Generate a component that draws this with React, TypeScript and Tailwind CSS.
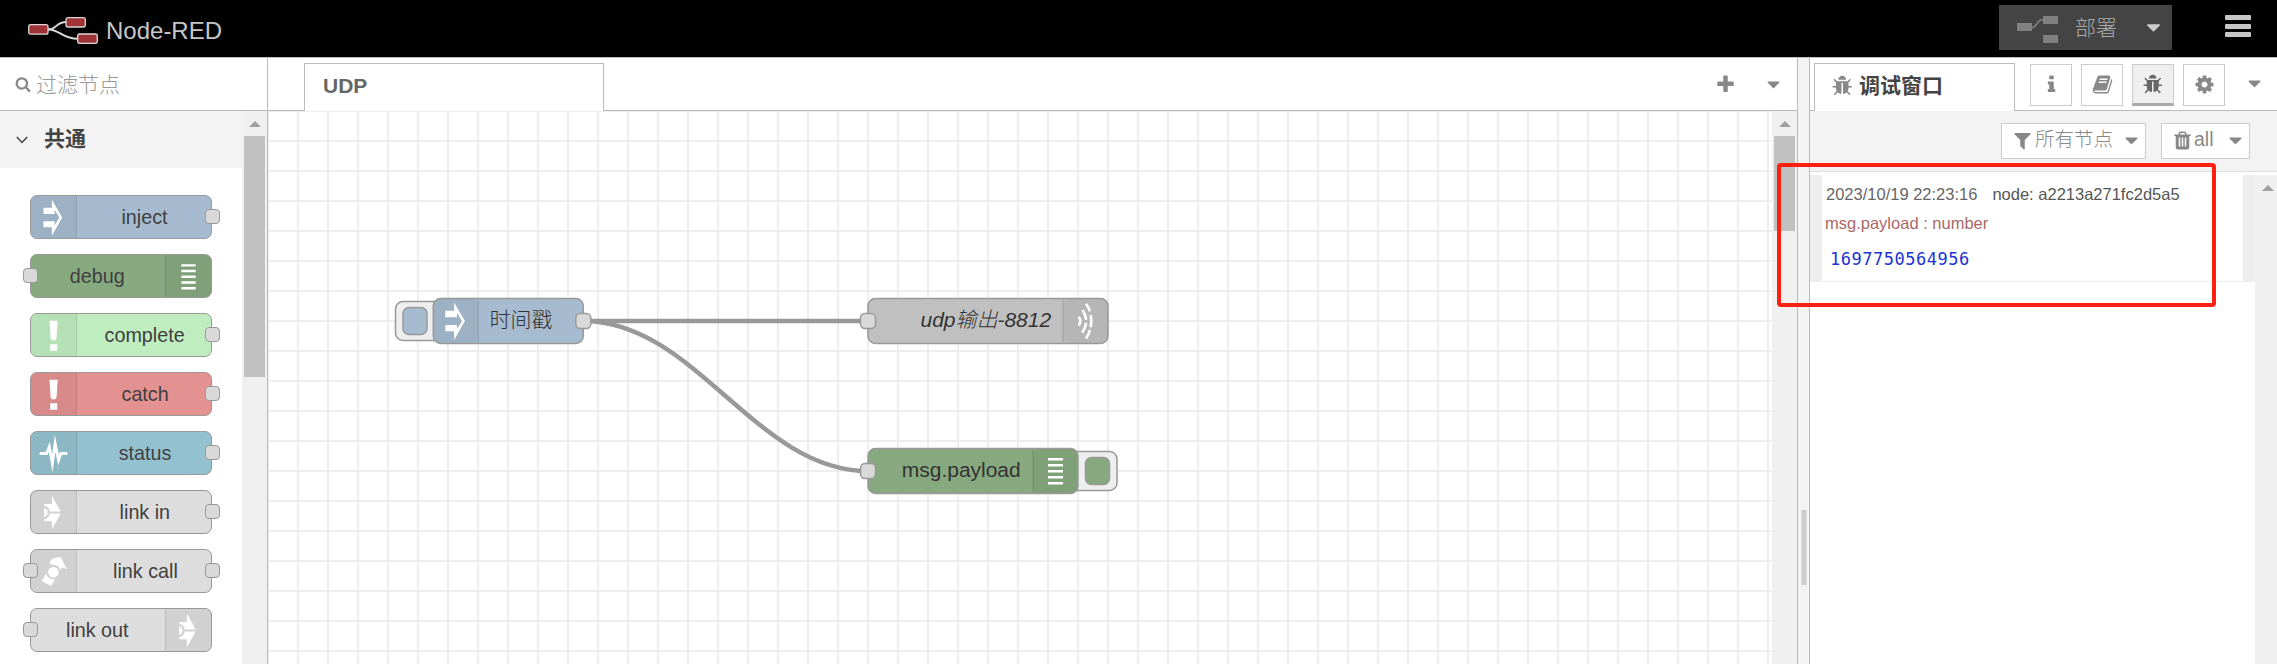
import React from "react";

const PATHS = {
  search:
    "M1216 832q0-185-131.5-316.5t-316.5-131.5-316.5 131.5-131.5 316.5 131.5 316.5 316.5 131.5 316.5-131.5 131.5-316.5zm512 832q0 52-38 90t-90 38q-54 0-90-38l-343-342q-179 124-399 124-143 0-273.5-55.5t-225-150-150-225-55.5-273.5 55.5-273.5 150-225 225-150 273.5-55.5 273.5 55.5 225 150 150 225 55.5 273.5q0 220-124 399l343 343q37 37 37 90z",
  plus: "M1600 736v192q0 40-28 68t-68 28h-416v416q0 40-28 68t-68 28h-192q-40 0-68-28t-28-68v-416h-416q-40 0-68-28t-28-68v-192q0-40 28-68t68-28h416v-416q0-40 28-68t68-28h192q40 0 68 28t28 68v416h416q40 0 68 28t28 68z",
  caret:
    "M1408 704q0 26-19 45l-448 448q-19 19-45 19t-45-19l-448-448q-19-19-19-45t19-45 45-19h896q26 0 45 19t19 45z",
  info: "M1216 1344v128q0 26-19 45t-45 19h-512q-26 0-45-19t-19-45v-128q0-26 19-45t45-19h64v-384h-64q-26 0-45-19t-19-45v-128q0-26 19-45t45-19h384q26 0 45 19t19 45v576h64q26 0 45 19t19 45zm-128-1152v192q0 26-19 45t-45 19h-256q-26 0-45-19t-19-45v-192q0-26 19-45t45-19h256q26 0 45 19t19 45z",
  book: "M1703 478q40 57 18 129l-275 906q-19 64-76.5 107.5t-122.5 43.5h-923q-77 0-148.5-53.5t-99.5-131.5q-24-67-2-127 0-4 3-27t4-37q1-8-3-21.5t-3-19.5q2-11 8-21t16.5-23.5 16.5-23.5q23-38 45-91.5t30-91.5q3-10 .5-30t-.5-28q3-11 17-28t17-23q21-36 42-92t25-90q1-9-2.5-32t.5-28q4-13 22-30.5t22-22.5q19-26 42.5-84.5t27.5-96.5q1-8-3-25.5t-2-26.5q2-8 9-18t18-23 17-21q8-12 16.5-30.5t15-35 16-36 19.5-32 26.5-23.5 36-11.5 47.5 5.5l-1 3q38-9 51-9h761q74 0 114 56t18 130l-274 906q-36 119-71.5 153.5t-128.5 34.5h-869q-27 0-38 15-11 16-1 43 24 70 144 70h923q29 0 56-15.5t35-41.5l300-987q7-22 5-57 38 15 59 43zm-1064 2q-4 13 2 22.5t20 9.5h608q13 0 25.5-9.5t16.5-22.5l21-64q4-13-2-22.5t-20-9.5h-608q-13 0-25.5 9.5t-16.5 22.5zm-83 256q-4 13 2 22.5t20 9.5h608q13 0 25.5-9.5t16.5-22.5l21-64q4-13-2-22.5t-20-9.5h-608q-13 0-25.5 9.5t-16.5 22.5z",
  bug: "M1632 960q0 26-19 45t-45 19h-224q0 171-67 290l208 209q19 19 19 45t-19 45q-18 19-45 19t-45-19l-198-197q-5 5-15 13t-42 28.5-65 36.5-82 29-97 13v-896h-128v896q-51 0-101.5-13.5t-87-33-66-39-43.5-32.5l-15-14-183 207q-20 21-48 21-24 0-43-16-19-18-20.5-44.5t15.5-46.5l202-227q-58-114-58-274h-224q-26 0-45-19t-19-45 19-45 45-19h224v-294l-173-173q-19-19-19-45t19-45 45-19 45 19l173 173h844l173-173q19-19 45-19t45 19 19 45-19 45l-173 173v294h224q26 0 45 19t19 45zm-480-576h-640q0-133 93.5-226.5t226.5-93.5 226.5 93.5 93.5 226.5z",
  cog: "M1152 896q0-106-75-181t-181-75-181 75-75 181 75 181 181 75 181-75 75-181zm512-109v222q0 12-8 23t-20 13l-185 28q-19 54-39 91 35 50 107 138 10 12 10 25t-9 23q-27 37-99 108t-94 71q-12 0-26-9l-138-108q-44 23-91 38-16 136-29 186-7 28-36 28h-222q-14 0-24.5-8.5t-11.5-21.5l-28-184q-49-16-90-37l-141 107q-10 9-25 9-14 0-25-11-126-114-165-168-7-10-7-23 0-12 8-23 15-21 51-66.5t54-70.5q-27-50-41-99l-183-27q-13-2-21-12.5t-8-23.5v-222q0-12 8-23t19-13l186-28q14-46 39-92-40-57-107-138-10-12-10-24 0-10 9-23 26-36 98.5-107.5t94.5-71.5q13 0 26 10l138 107q44-23 91-38 16-136 29-186 7-28 36-28h222q14 0 24.5 8.5t11.5 21.5l28 184q49 16 90 37l142-107q9-9 24-9 13 0 25 10 129 119 165 170 7 8 7 22 0 12-8 23-15 21-51 66.5t-54 70.5q26 50 41 98l183 28q13 2 21 12.5t8 23.5z",
  filter:
    "M1595 295q17 41-14 70l-493 493v742q0 42-39 59-13 5-25 5-27 0-45-19l-256-256q-19-19-19-45v-486l-493-493q-31-29-14-70 17-39 59-39h1280q42 0 59 39z",
  trash:
    "M704 1376v-704q0-14-9-23t-23-9h-64q-14 0-23 9t-9 23v704q0 14 9 23t23 9h64q14 0 23-9t9-23zm256 0v-704q0-14-9-23t-23-9h-64q-14 0-23 9t-9 23v704q0 14 9 23t23 9h64q14 0 23-9t9-23zm256 0v-704q0-14-9-23t-23-9h-64q-14 0-23 9t-9 23v704q0 14 9 23t23 9h64q14 0 23-9t9-23zm-544-992h448l-48-117q-7-9-17-11h-317q-10 2-17 11zm928 32v64q0 14-9 23t-23 9h-96v948q0 83-47 143.5t-113 60.5h-832q-66 0-113-58.5t-47-141.5v-952h-96q-14 0-23-9t-9-23v-64q0-14 9-23t23-9h309l70-167q15-37 54-63t79-26h320q40 0 79 26t54 63l70 167h309q14 0 23 9t9 23z",
};

function Icon({ name, className = "size-[21px]" }: { name: keyof typeof PATHS; className?: string }) {
  return (
    <svg viewBox="0 0 1792 1792" className={`shrink-0 fill-current ${className}`}>
      <path d={PATHS[name]} />
    </svg>
  );
}

type NodeIconName = "inject" | "debug" | "alert" | "status" | "link" | "call" | "udp";

/* Node icons are drawn on a 45 x 45 grid. */
function Glyph({ name, cut = "#d2d2d2" }: { name: NodeIconName; cut?: string }) {
  switch (name) {
    case "inject":
      return (
        <path
          fill="#fff"
          fillRule="evenodd"
          d="M12 12.3h8.800V4L31.600 22.500 20.800 41.500v-8.800H12v-6.300h11.700v4.200L28.700 22.500 23.700 14.300v4.500H12z"
        />
      );
    case "debug":
      return <path stroke="#fff" strokeWidth="2.5" d="M15 10.8h15M15 16.8h15M15 22.8h15M15 28.8h15M15 34.8h15" />;
    case "alert":
      return <path fill="#fff" d="M18.3 7h8.6l-1.2 18.4q-.3 2.3-3.1 2.3t-3.1-2.3zM19 31.6h7.4v6.8H19z" />;
    case "status":
      return (
        <path
          fill="none"
          stroke="#fff"
          strokeWidth="3"
          strokeMiterlimit="12"
          d="M8 22.5h7.2l2.9-7 3.2 17.500L24.2 12l3.6 17.500 2.4-7H37"
        />
      );
    case "link":
      return (
        <g>
          <path fill="#fff" d="M12.8 13.6h8V4.8l9.8 17.7-9.8 17.9v-8.8h-8z" />
          <path fill="none" stroke={cut} strokeWidth="2.3" d="M12.5 16.6a6 6 0 0 1 0 11.8M18.6 22.5H32" />
        </g>
      );
    case "call":
      return (
        <g>
          <path fill="#fff" d="M10.2 32.500 21 15.500 18.300 13.500Q20 7.500 30 7.400L36.600 20.300 31.500 18 20 37.700z" />
          <circle cx="22.4" cy="23.2" r="6.6" fill="#fff" stroke={cut} strokeWidth="2.2" />
        </g>
      );
    case "udp":
      return (
        <path
          fill="none"
          stroke="#fff"
          strokeWidth="2.6"
          d="M15.6 18.2q3.4 4.4 0 8.8M19.4 11.4q3.4 4.6 3.7 10M23.1 24.4q-.5 5.2-3.9 9.8M23 5.2q2.8 3.7 3.9 7.6M27.8 16.5q1 6.5 0 12.2M26.9 31.5q-1.2 4.6-3.9 8.4"
        />
      );
  }
}

type PaletteItem = {
  label: string;
  icon: NodeIconName;
  bg: string;
  left?: boolean;
  right?: boolean;
  iconRight?: boolean;
};

const PALETTE: PaletteItem[] = [
  { label: "inject", icon: "inject", bg: "bg-[#a6bbcf]", right: true },
  { label: "debug", icon: "debug", bg: "bg-[#87a980]", left: true, iconRight: true },
  { label: "complete", icon: "alert", bg: "bg-[#c0edc0]", right: true },
  { label: "catch", icon: "alert", bg: "bg-[#e49191]", right: true },
  { label: "status", icon: "status", bg: "bg-[#94c1d0]", right: true },
  { label: "link in", icon: "link", bg: "bg-[#dddddd]", right: true },
  { label: "link call", icon: "call", bg: "bg-[#dddddd]", left: true, right: true },
  { label: "link out", icon: "link", bg: "bg-[#dddddd]", left: true, iconRight: true },
];

function PaletteNode({ item }: { item: PaletteItem }) {
  const port = "absolute top-[13px] size-[15px] rounded-[4px] border border-[#999] bg-[#d9d9d9]";
  return (
    <div
      className={`relative flex h-[44px] w-[182px] rounded-[7px] border border-[#999] ${item.bg} ${
        item.iconRight ? "flex-row-reverse" : ""
      }`}
    >
      <div
        className={`flex w-[46px] items-center justify-center bg-black/5 ${
          item.iconRight ? "rounded-r-[6px] border-l border-black/10" : "rounded-l-[6px] border-r border-black/10"
        }`}
      >
        <svg viewBox="0 0 45 45" className="size-[43px]">
          <Glyph name={item.icon} />
        </svg>
      </div>
      <div className={`flex flex-1 items-center justify-center pb-[2px] ${item.iconRight ? "pr-[2px]" : "pl-[2px]"}`}>
        <span className="scale-x-[.94] text-[21px] leading-none whitespace-nowrap text-[#3f3f3f]">{item.label}</span>
      </div>
      {item.left && <i className={`${port} -left-[8px]`} />}
      {item.right && <i className={`${port} -right-[9px]`} />}
    </div>
  );
}

function ScrollArrow() {
  return (
    <svg viewBox="0 0 12 6" className="h-[6px] w-[12px] shrink-0 fill-[#a0a0a0]">
      <path d="M0 6 6 0l6 6z" />
    </svg>
  );
}

function ScrollBar({ thumb }: { thumb: string }) {
  return (
    <div className="flex w-[25px] shrink-0 flex-col items-center bg-[#f0f0f0] pt-[10px]">
      <ScrollArrow />
      <div className={`mt-[9px] w-[21px] bg-[#c1c1c1] ${thumb}`} />
    </div>
  );
}

function Port({ x, y }: { x: number; y: number }) {
  return <rect x={x - 5} y={y - 5} width="10" height="10" rx="3" fill="#d9d9d9" stroke="#999" />;
}

type FlowNodeProps = {
  x: number;
  y: number;
  w: number;
  fill: string;
  icon: NodeIconName;
  iconRight?: boolean;
  label: string;
  labelX: number;
  italic?: boolean;
};

function FlowNode({ x, y, w, fill, icon, iconRight, label, labelX, italic }: FlowNodeProps) {
  const ix = iconRight ? w - 30 : 0;
  return (
    <g transform={`translate(${x} ${y})`}>
      <rect width={w} height="30" rx="5" fill={fill} />
      <rect x={ix} width="30" height="30" rx="4" fill="#000" fillOpacity=".05" />
      <path d={`M${iconRight ? ix : 30} 1v28`} stroke="#000" strokeOpacity=".1" />
      <rect width={w} height="30" rx="5" fill="none" stroke="#999" />
      <g transform={`translate(${ix} 0) scale(.66667)`}>
        <Glyph name={icon} />
      </g>
      <text x={labelX} y="19.3" fontSize="14" fill="#333" className={italic ? "font-light italic" : "font-light"}>
        {label}
      </text>
    </g>
  );
}

function Workspace() {
  return (
    <svg viewBox="0 0 1002.667 368.667" className="h-[553px] w-[1504px] shrink-0">
      <defs>
        <pattern id="grid" width="20" height="20" x="-10" y="-10" patternUnits="userSpaceOnUse">
          <path d="M10 0v20M0 10h20" stroke="#eee" strokeWidth="1.3333" />
        </pattern>
      </defs>
      <rect width="1003" height="369" fill="url(#grid)" />
      <g fill="none" stroke="#999" strokeWidth="3">
        <path d="M210 140H400" />
        <path d="M210 140C285 140 325 240 400 240" />
      </g>
      <rect x="85" y="127" width="32" height="26" rx="5" fill="#eee" stroke="#999" />
      <rect x="90" y="131" width="16" height="18" rx="4" fill="#a6bbcf" stroke="#999" />
      <FlowNode x={110.2} y={125} w={100} fill="#a6bbcf" icon="inject" label="时间戳" labelX={37.5} />
      <FlowNode x={400} y={125} w={160} fill="#c0c0c0" icon="udp" iconRight label="udp输出-8812" labelX={35} italic />
      <rect x="534" y="227" width="32" height="26" rx="5" fill="#eee" stroke="#999" />
      <rect x="545" y="231" width="16" height="18" rx="4" fill="#87a980" stroke="#999" />
      <FlowNode x={400} y={225} w={140} fill="#87a980" icon="debug" iconRight label="msg.payload" labelX={22.5} />
      <Port x={210.2} y={140} />
      <Port x={400} y={140} />
      <Port x={400} y={240} />
    </svg>
  );
}

function Header() {
  return (
    <header className="flex h-[57px] shrink-0 bg-black">
      <div className="flex pl-[28px]">
        <svg viewBox="0 0 70 27" className="mt-[17px] h-[27px] w-[70px]">
          <g fill="none" stroke="#d9d9d9" strokeWidth="1.9">
            <path d="M20 12.5c9 0 8-7.5 18-7.5" />
            <path d="M20 12.5c12 0 14 9.300 30 9.300" />
          </g>
          <g fill="#a03335" stroke="#d9d9d9" strokeWidth="1.3">
            <rect x=".7" y="7.700" width="19.300" height="9.500" rx="2" />
            <rect x="38" y=".7" width="19.300" height="9.300" rx="2" />
            <rect x="49.700" y="17" width="19.600" height="9.300" rx="2" />
          </g>
        </svg>
        <span className="ml-[8px] mt-[16px] text-[24px] leading-[30px] text-[#c7c7c7]">Node-RED</span>
      </div>
      <div className="ml-auto mr-[26px] flex">
        <div className="mt-[5px] flex h-[45px] w-[173px] bg-[#444] pl-[18px]">
          <svg viewBox="0 0 41 27" className="mt-[11px] h-[27px] w-[41px]">
            <path d="M15 11.500c6 0 4-8 11-8" fill="none" stroke="#808080" strokeWidth="1.600" />
            <path d="M0 7h15v8H0zM26 0h15v8H26zM26 19h15v8H26z" fill="#808080" />
          </svg>
          <span className="ml-[17px] mt-[8px] text-[21px] leading-[30px] font-light whitespace-nowrap text-[#aaa]">部署</span>
          <Icon name="caret" className="ml-[25px] mt-[11px] size-[23px] text-[#ccc]" />
        </div>
        <div className="ml-[53px] mt-[15px] flex h-[22px] w-[26px] flex-col justify-between">
          <i className="h-[5px] rounded-[1px] bg-[#c7c7c7]" />
          <i className="h-[5px] rounded-[1px] bg-[#c7c7c7]" />
          <i className="h-[5px] rounded-[1px] bg-[#c7c7c7]" />
        </div>
      </div>
    </header>
  );
}

function PalettePanel() {
  return (
    <aside className="flex w-[268px] shrink-0 flex-col border-r border-[#bbb]">
      <div className="flex h-[53px] shrink-0 items-center border-b border-[#bbb] pl-[15px] text-[#888]">
        <Icon name="search" className="size-[16px]" />
        <span className="ml-[5px] text-[21px] leading-none font-light text-[#999]">过滤节点</span>
      </div>
      <div className="flex min-h-0 flex-1">
        <div className="min-w-0 flex-1 overflow-hidden">
          <div className="flex h-[57px] items-center bg-[#f3f3f3] pl-[16px]">
            <svg viewBox="0 0 12 8" className="h-[8px] w-[12px]">
              <path d="M.8 1 6 6.500 11.200 1" fill="none" stroke="#444" strokeWidth="1.500" />
            </svg>
            <span className="ml-[16px] pb-[2px] text-[21px] leading-none font-bold text-[#444]">共通</span>
          </div>
          <div className="flex flex-col gap-[15px] pl-[30px] pt-[27px]">
            {PALETTE.map((item) => (
              <PaletteNode key={item.label} item={item} />
            ))}
          </div>
        </div>
        <ScrollBar thumb="h-[241px]" />
      </div>
    </aside>
  );
}

function Editor() {
  return (
    <main className="flex w-[1530px] shrink-0 flex-col border-r border-[#bbb]">
      <div className="flex h-[53px] shrink-0">
        <div className="w-[36px] border-b border-[#bbb]" />
        <div className="mt-[5px] flex w-[300px] items-center border border-b-0 border-[#bbb] pb-[4px] pl-[18px]">
          <span className="text-[21px] leading-none font-bold text-[#666]">UDP</span>
        </div>
        <div className="flex flex-1 items-center justify-end border-b border-[#bbb] pr-[13px] text-[#888]">
          <Icon name="plus" className="mr-[27px] size-[21px]" />
          <Icon name="caret" />
        </div>
      </div>
      <div className="flex flex-1">
        <Workspace />
        <ScrollBar thumb="h-[95px]" />
      </div>
    </main>
  );
}

function SidebarButton({ name, active }: { name: keyof typeof PATHS; active?: boolean }) {
  return (
    <div
      className={`flex size-[42px] items-center justify-center border border-[#ccc] ${
        active ? "border-b-[3px] border-b-[#aaa] bg-[#efefef] text-[#666]" : "bg-white pb-[2px] text-[#888]"
      }`}
    >
      <Icon name={name} />
    </div>
  );
}

function Sidebar() {
  return (
    <aside className="flex min-w-0 flex-1 flex-col border-l border-[#bbb]">
      <div className="flex h-[53px] shrink-0">
        <div className="w-[4px] border-b border-[#bbb]" />
        <div className="mt-[5px] flex w-[201px] items-center border border-b-0 border-[#bbb] pb-[4px] pl-[17px]">
          <Icon name="bug" className="size-[22px] text-[#888]" />
          <span className="ml-[5px] text-[21px] leading-none font-bold text-[#444]">调试窗口</span>
        </div>
        <div className="flex flex-1 border-b border-[#bbb] pl-[15px] pt-[6px]">
          <div className="flex gap-[9px]">
            <SidebarButton name="info" />
            <SidebarButton name="book" />
            <SidebarButton name="bug" active />
            <SidebarButton name="cog" />
          </div>
          <Icon name="caret" className="ml-[19px] mt-[9px] size-[21px] text-[#888]" />
        </div>
      </div>
      <div className="flex h-[61px] shrink-0 justify-end gap-[15px] border-b border-[#ddd] bg-[#f3f3f3] pr-[27px] pt-[12px] text-[#888]">
        <div className="flex h-[36px] w-[145px] items-center border border-[#ccc] bg-white pb-[2px] pl-[10px]">
          <Icon name="filter" />
          <span className="ml-[2px] text-[19.5px] leading-none font-light whitespace-nowrap">所有节点</span>
          <Icon name="caret" className="ml-[8px] size-[21px]" />
        </div>
        <div className="flex h-[36px] w-[89px] items-center border border-[#ccc] bg-white pb-[2px] pl-[10px]">
          <Icon name="trash" />
          <span className="ml-[1px] text-[19.5px] leading-none">all</span>
          <Icon name="caret" className="ml-[11px] size-[21px]" />
        </div>
      </div>
      <div className="flex flex-1 pt-[3px]">
        <div className="flex-1">
          <div className="flex h-[107px] flex-col border-x-[12px] border-b border-x-[#eee] border-b-[#eee] pl-[4px] pt-[9px]">
            <div className="flex text-[16.5px] leading-[20px] text-[#666]">
              <span>2023/10/19 22:23:16</span>
              <span className="ml-[15px] text-[#555]">node: a2213a271fc2d5a5</span>
            </div>
            <div className="mt-[9px] -ml-[1px] text-[16.5px] leading-[20px] text-[#aa6767]">msg.payload : number</div>
            <div className="mt-[15px] pl-[4px] font-['DejaVu_Sans_Mono',monospace] text-[17px] leading-[22px] tracking-[.52px] text-[#2033d6]">
              1697750564956
            </div>
          </div>
        </div>
        <div className="flex w-[22px] justify-center bg-[#f0f0f0] pl-[3px] pt-[10px]">
          <ScrollArrow />
        </div>
      </div>
    </aside>
  );
}

export default function App() {
  return (
    <div className="relative flex h-[664px] w-[2277px] flex-col overflow-hidden bg-white font-['Liberation_Sans','Noto_Sans_CJK_SC',sans-serif]">
      <Header />
      <div className="flex min-h-0 flex-1 border-t border-[#bbb]">
        <PalettePanel />
        <Editor />
        <div className="w-[11px] shrink-0 bg-[#f3f3f3] pl-[3px] pt-[452px]">
          <div className="h-[75px] w-[6px] border-x border-[#ddd] bg-[#ccc]" />
        </div>
        <Sidebar />
      </div>
      <div className="absolute left-[1777px] top-[163px] h-[144px] w-[439px] rounded-[4px] border-4 border-[#ff2012]" />
    </div>
  );
}
